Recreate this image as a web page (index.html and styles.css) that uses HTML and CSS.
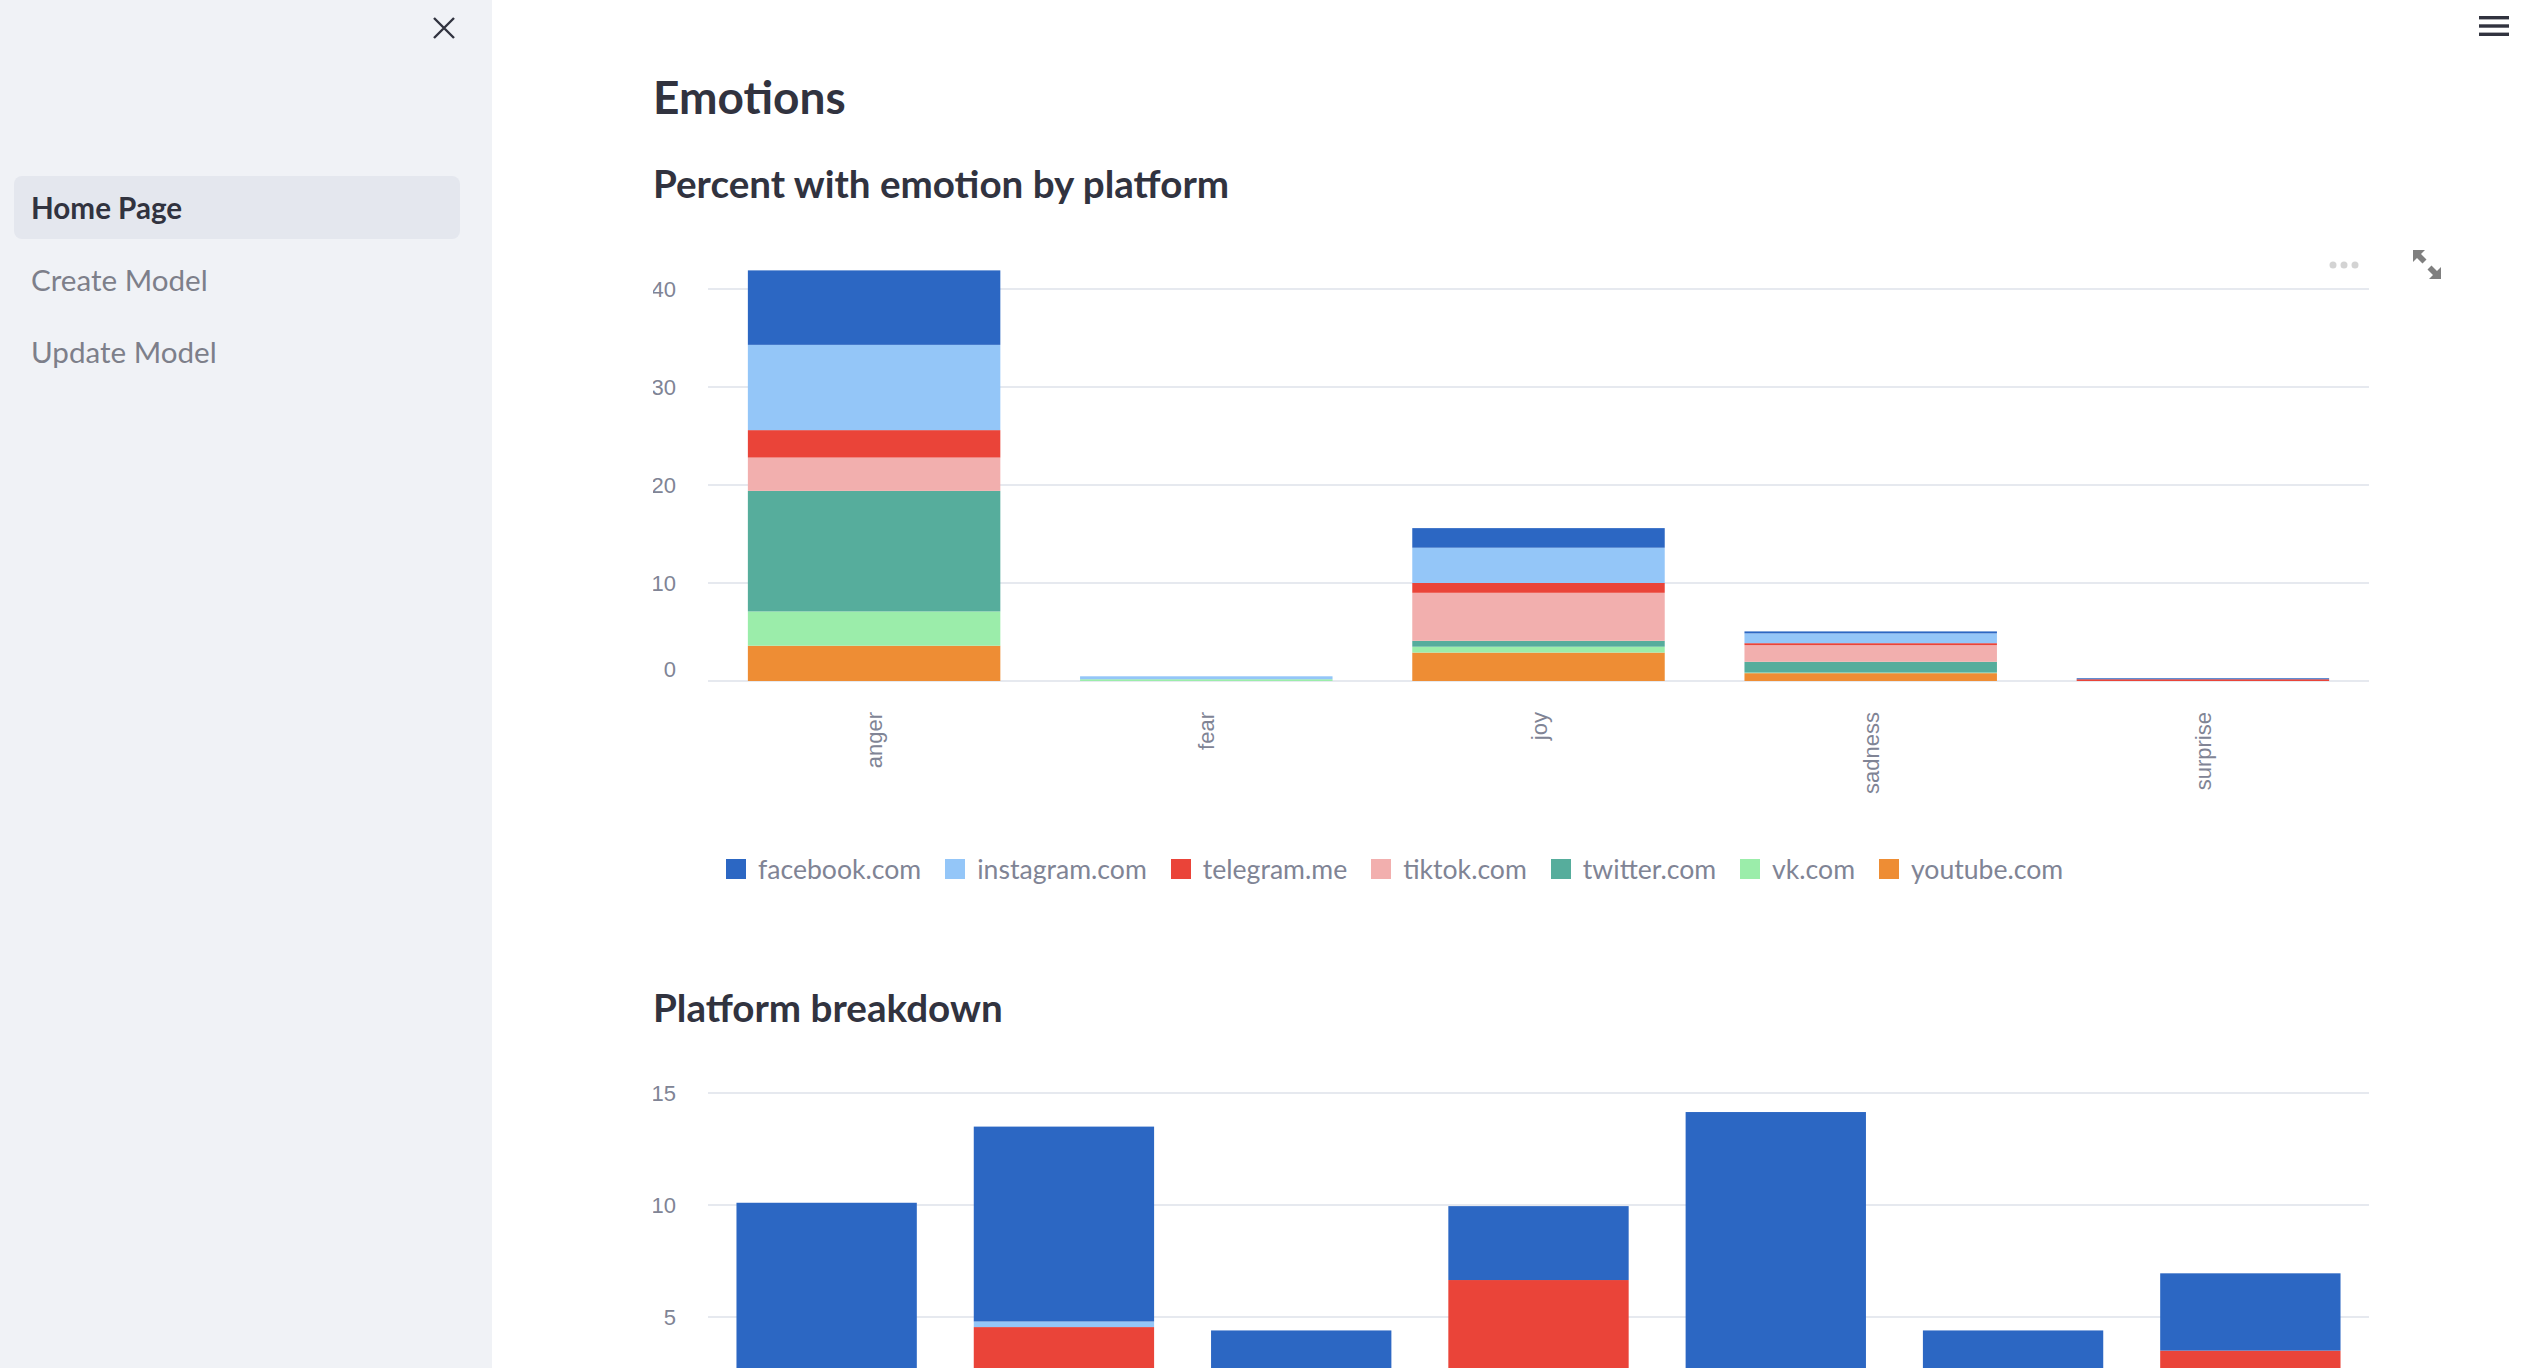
FILE: index.html
```html
<!DOCTYPE html>
<html>
<head>
  <title>Home Page</title>
  <meta charset="utf-8">
  <link rel="stylesheet" href="styles.css">
</head>
<body>
  <div class="app">
    <aside class="sidebar">
      <div class="sidebar-head">
        <button class="close-btn" aria-label="Close sidebar">
          <svg width="22" height="22" viewBox="0 0 22 22"><path d="M1 1L21 21M21 1L1 21" stroke="#31333f" stroke-width="2.4" fill="none"/></svg>
        </button>
      </div>
      <ul class="nav">
        <li class="nav-item active">Home Page</li>
        <li class="nav-item">Create Model</li>
        <li class="nav-item">Update Model</li>
      </ul>
    </aside>

    <main class="main">
      <div class="menu-btn">
        <svg width="30" height="20" viewBox="0 0 30 20"><rect x="0" y="0" width="30" height="3.4" fill="#31333f"/><rect x="0" y="8.3" width="30" height="3.4" fill="#31333f"/><rect x="0" y="16.6" width="30" height="3.4" fill="#31333f"/></svg>
      </div>

      <h1 class="title">Emotions</h1>
      <h2 class="subtitle">Percent with emotion by platform</h2>

      <div class="chart" id="chart1">
        <div class="toolbar">
          <svg class="dots" width="30" height="8" viewBox="0 0 30 8"><circle cx="4" cy="4" r="3.5" fill="#d3d3d3"/><circle cx="15" cy="4" r="3.5" fill="#d3d3d3"/><circle cx="26" cy="4" r="3.5" fill="#d3d3d3"/></svg>
          <svg class="expand" width="28" height="29" viewBox="0 0 28 29"><path d="M0 0H12L8 4L13.5 9.5L9.5 13.5L4 8L0 12Z" fill="#7f7f7f"/><path d="M28 29H16L20 25L14.5 19.5L18.5 15.5L24 21L28 17Z" fill="#7f7f7f"/></svg>
        </div>
      </div>

      <div class="legend" id="legend1"></div>

      <h2 class="subtitle second">Platform breakdown</h2>
      <div class="chart" id="chart2"></div>
    </main>
  </div>

  <script type="text/javascript">
    var platforms = ["facebook.com", "instagram.com", "telegram.me", "tiktok.com", "twitter.com", "vk.com", "youtube.com"];
    var colors = ["#2c67c3", "#94c6f8", "#ea4439", "#f2afae", "#56ad9c", "#9bedaa", "#ee8d34"];
    var NS = "http://www.w3.org/2000/svg";

    // values listed in the same order as platforms
    var emotions = [
      {name: "anger",    v: [7.6, 8.7, 2.8, 3.4, 12.3, 3.5, 3.6]},
      {name: "fear",     v: [0, 0.3, 0, 0, 0, 0.18, 0]},
      {name: "joy",      v: [2.0, 3.6, 1.0, 4.9, 0.6, 0.6, 2.9]},
      {name: "sadness",  v: [0.2, 1.0, 0.2, 1.7, 1.1, 0.06, 0.8]},
      {name: "surprise", v: [0.1, 0, 0.18, 0, 0, 0, 0]}
    ];
    var breakdown = [
      {name: "", v: [10.1, 0, 0, 0, 0, 0, 0]},
      {name: "", v: [8.7, 0.25, 4.55, 0, 0, 0, 0]},
      {name: "", v: [4.4, 0, 0, 0, 0, 0, 0]},
      {name: "", v: [3.3, 0, 6.65, 0, 0, 0, 0]},
      {name: "", v: [14.15, 0, 0, 0, 0, 0, 0]},
      {name: "", v: [4.4, 0, 0, 0, 0, 0, 0]},
      {name: "", v: [3.45, 0, 3.5, 0, 0, 0, 0]}
    ];

    function el(tag, attrs, text) {
      var e = document.createElementNS(NS, tag);
      for (var k in attrs) e.setAttribute(k, attrs[k]);
      if (text !== undefined) e.textContent = text;
      return e;
    }

    function barChart(box, data, o) {
      var svg = el("svg", {width: o.width, height: o.height, "class": "plot"});
      var band = (o.right - o.left) / data.length;
      // grid + y labels
      for (var t = 0; t < o.ticks.length; t++) {
        var y = o.base - o.ticks[t] * o.unit;
        svg.appendChild(el("rect", {x: o.left, y: y - 1, width: o.right - o.left, height: 2, fill: "#e6e9ef"}));
        if (y > o.height) continue;
        var lab = el("text", {x: 23, y: y, "text-anchor": "end", "class": "axis"}, String(o.ticks[t]));
        if (o.ticks[t] == 0) { lab.setAttribute("y", y - 4); }
        else { lab.setAttribute("dominant-baseline", "central"); }
        svg.appendChild(lab);
      }
      // bars, stacked from the last platform up to the first
      for (var i = 0; i < data.length; i++) {
        var bw = band * 0.76;
        var bx = o.left + band * i + (band - bw) / 2;
        var acc = 0;
        for (var p = platforms.length - 1; p >= 0; p--) {
          var val = data[i].v[p];
          if (!val) continue;
          var y1 = o.base - (acc + val) * o.unit;
          svg.appendChild(el("rect", {x: bx, y: y1, width: bw, height: val * o.unit, fill: colors[p]}));
          acc += val;
        }
        if (data[i].name) {
          var cx = bx + bw / 2 + 8;
          svg.appendChild(el("text", {x: 0, y: 0, "text-anchor": "end", "class": "axis",
            transform: "translate(" + cx + "," + (o.base + 31) + ") rotate(-90)"}, data[i].name));
        }
      }
      box.insertBefore(svg, box.firstChild);
    }

    barChart(document.getElementById("chart1"), emotions,
      {width: 1718, height: 570, left: 55, right: 1716, base: 451, unit: 9.8, ticks: [0, 10, 20, 30, 40]});
    barChart(document.getElementById("chart2"), breakdown,
      {width: 1718, height: 330, left: 55, right: 1716, base: 389, unit: 22.4, ticks: [0, 5, 10, 15]});

    var legend = document.getElementById("legend1");
    for (var i = 0; i < platforms.length; i++) {
      var item = document.createElement("div");
      item.className = "legend-item";
      item.innerHTML = '<span class="swatch" style="background:' + colors[i] + '"></span>' + platforms[i];
      legend.appendChild(item);
    }
  </script>
</body>
</html>
```

FILE: styles.css
```css
html, body {
  margin: 0;
  padding: 0;
  height: 100%;
  overflow: hidden;
  background-color: #fff;
  color: #31333f;
  font-family: Lato, "Liberation Sans", sans-serif;
}
.app {
  display: flex;
  height: 100vh;
}
.sidebar {
  width: 492px;
  flex-shrink: 0;
  background-color: #f0f2f6;
}
.sidebar-head {
  display: flex;
  justify-content: flex-end;
  padding: 17px 37px 0 0;
}
.close-btn {
  width: 22px;
  height: 22px;
  padding: 0;
  border: none;
  background: none;
  display: block;
}
.close-btn svg {
  display: block;
}
.nav {
  list-style: none;
  margin: 137px 32px 0 14px;
  padding: 0;
  display: flex;
  flex-direction: column;
  gap: 9px;
}
.nav-item {
  height: 63px;
  display: flex;
  align-items: center;
  padding-left: 17px;
  border-radius: 8px;
  font-size: 29.6px;
  color: #7d7f8a;
}
.nav-item.active {
  background-color: #e4e7ee;
  color: #31333f;
  font-weight: 700;
}
.main {
  flex: 1;
  position: relative;
  padding: 70px 154px 0 161px;
  min-width: 0;
  overflow: hidden;
}
.menu-btn {
  position: absolute;
  top: 16px;
  right: 17px;
  line-height: 0;
}
.title {
  margin: 0;
  font-size: 46px;
  line-height: 54px;
  font-weight: 700;
}
.subtitle {
  margin: 36px 0 0 0;
  font-size: 38.6px;
  line-height: 46px;
  font-weight: 700;
}
.subtitle.second {
  margin-top: 96px;
}
.chart {
  position: relative;
  width: 1718px;
  margin-top: 24px;
  line-height: 0;
}
#chart2 {
  margin-top: 10px;
}
.plot {
  display: block;
}
.axis {
  font-family: "Liberation Sans", Arial, sans-serif;
  font-size: 22px;
  fill: #808495;
}
.toolbar {
  position: absolute;
  top: 20px;
  left: 1676px;
  display: flex;
  align-items: center;
  gap: 54px;
}
.toolbar .dots {
  display: block;
}
.toolbar .expand {
  display: block;
}
.legend {
  display: flex;
  align-items: center;
  gap: 24px;
  margin-top: 50px;
  padding-left: 73px;
  height: 38px;
}
.legend-item {
  display: flex;
  align-items: center;
  gap: 12px;
  font-size: 26.6px;
  color: #808495;
}
.swatch {
  width: 20px;
  height: 20px;
  display: inline-block;
}
```
